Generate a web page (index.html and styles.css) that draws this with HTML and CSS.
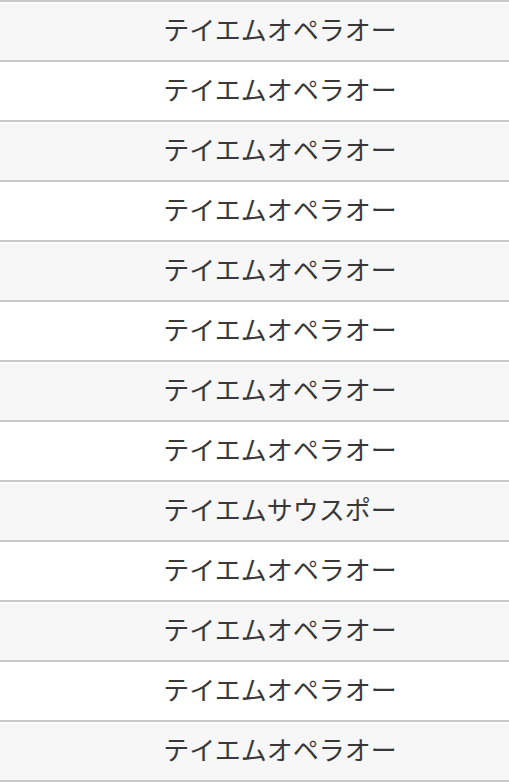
FILE: index.html
```html
<!DOCTYPE html>
<html lang="ja">
<head>
<meta charset="utf-8">
<link rel="stylesheet" href="styles.css">
</head>
<body>
<ul class="list">
  <li class="row alt">テイエムオペラオー</li>
  <li class="row">テイエムオペラオー</li>
  <li class="row alt">テイエムオペラオー</li>
  <li class="row">テイエムオペラオー</li>
  <li class="row alt">テイエムオペラオー</li>
  <li class="row">テイエムオペラオー</li>
  <li class="row alt">テイエムオペラオー</li>
  <li class="row">テイエムオペラオー</li>
  <li class="row alt">テイエムサウスポー</li>
  <li class="row">テイエムオペラオー</li>
  <li class="row alt">テイエムオペラオー</li>
  <li class="row">テイエムオペラオー</li>
  <li class="row alt">テイエムオペラオー</li>
</ul>
</body>
</html>
```

FILE: styles.css
```css
html, body {
  margin: 0;
  padding: 0;
  background: #fff;
}
.list {
  list-style: none;
  margin: 0;
  padding: 0;
  border-bottom: 2px solid #c9c9c9;
}
.row {
  box-sizing: border-box;
  height: 60px;
  border-top: 2px solid #c9c9c9;
  display: flex;
  align-items: center;
  justify-content: center;
  padding-left: 51px;
  padding-bottom: 5px;
  font-family: "Noto Sans CJK JP", "Noto Sans", sans-serif;
  font-size: 26px;
  font-weight: 400;
  color: #383838;
  background: #fff;
}
.row.alt {
  background: #f7f7f7;
  box-shadow: inset 0 2px 0 #fdfdfd;
}
```
